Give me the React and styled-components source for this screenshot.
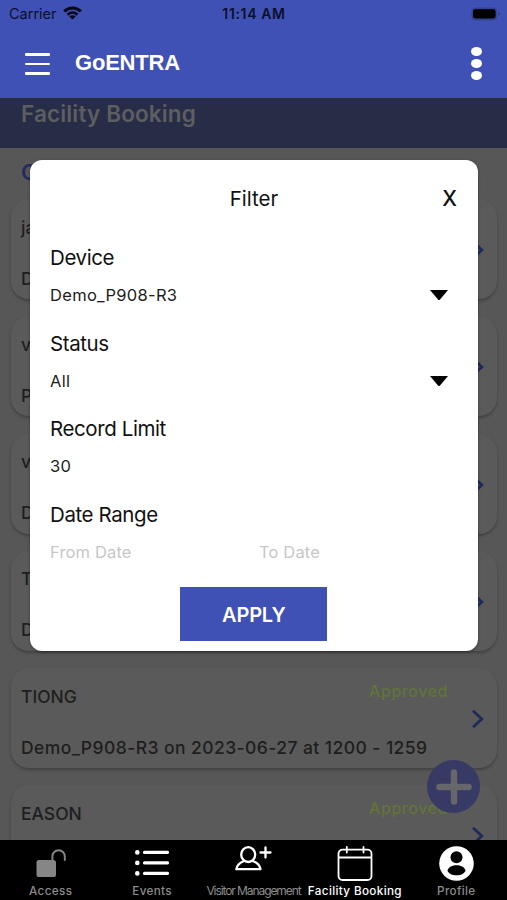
import React from "react";
import styled, { createGlobalStyle } from "styled-components";

const bookings = [
  { name: "ja", detail: "D" },
  { name: "v", detail: "P" },
  { name: "v", detail: "D" },
  { name: "T", detail: "D" },
  { name: "TIONG", detail: "Demo_P908-R3 on 2023-06-27 at 1200 - 1259", status: "Approved" },
  { name: "EASON", status: "Approved" },
];

function WifiIcon() {
  return (
    <svg width="19" height="14" viewBox="0 0 19 14" fill="none" stroke="#06081a" strokeWidth="3">
      <path d="M1.2 5.4C6 .7 13 .7 17.8 5.4" />
      <path d="M4.5 8.7c2.9-2.8 7.1-2.8 10 0" strokeWidth="2.6" />
      <path d="M9.5 13.6 6.3 10.5c1.8-1.7 4.6-1.7 6.4 0z" fill="#06081a" stroke="none" />
    </svg>
  );
}

function BatteryIcon() {
  return (
    <svg width="30" height="14" viewBox="0 0 30 14">
      <rect x=".5" y=".6" width="25.5" height="13" rx="4" fill="#35438f" />
      <rect x="2" y="2.3" width="22.6" height="9.2" rx="2.4" fill="#000" />
      <path d="M27.4 5v4c1.6-.6 1.6-3.4 0-4z" fill="#2b377c" />
    </svg>
  );
}

function AccessIcon() {
  return (
    <svg width="30" height="28" viewBox="0 0 30 28">
      <rect x=".5" y="11" width="19.5" height="17" rx="2.6" fill="#868686" />
      <path d="M16.4 12V7.4a6.2 6.2 0 0 1 12.4 0V11" fill="none" stroke="#868686" strokeWidth="1.9" strokeLinecap="round" />
    </svg>
  );
}

function EventsIcon() {
  return (
    <svg width="34" height="28" viewBox="0 0 34 28" fill="#fff" stroke="#fff" strokeLinecap="round" strokeWidth="3.4">
      <path d="M9.6 3.4H32.4M9.6 13.9H32.4M9.6 24.4H32.4" />
      <g stroke="none">
        <circle cx="2.3" cy="3.4" r="2.3" />
        <circle cx="2.3" cy="13.9" r="2.3" />
        <circle cx="2.3" cy="24.4" r="2.3" />
      </g>
    </svg>
  );
}

function VisitorIcon() {
  return (
    <svg width="38" height="28" viewBox="0 0 38 28" fill="none" stroke="#fff" strokeWidth="2.3" strokeLinecap="round" strokeLinejoin="round">
      <ellipse cx="14.2" cy="9.6" rx="7" ry="7.4" />
      <path d="M9.5 16.2C5.8 17.7 3 20.300 2.300 24.200h24.200c-.7-3.900-3.700-6.500-7.400-8" />
      <path d="M26.500 7.500h10M31.500 2.500v10" />
    </svg>
  );
}

function CalendarIcon() {
  return (
    <svg width="36" height="35" viewBox="0 0 36 35" fill="none" stroke="#fff" strokeWidth="1.8" strokeLinecap="round">
      <path d="M9.5 3.6H5.500a4 4 0 0 0-4 4v22.400a4 4 0 0 0 4 4h25a4 4 0 0 0 4-4V7.600a4 4 0 0 0-4-4h-4M9.500 3.600h17M1.500 11.500h33M9.800 1v5.500M26.500 1v5.500" />
    </svg>
  );
}

function ProfileIcon() {
  return (
    <svg width="35" height="35" viewBox="0 0 35 35">
      <circle cx="17.5" cy="17.5" r="17.3" fill="#fff" />
      <circle cx="17.5" cy="11.2" r="6" fill="#000" />
      <path d="M8.5 24.700c.8-4 5-5.500 9-5.500s8.200 1.500 9 5.500c-1.300 3-4.800 4.600-9 4.600s-7.700-1.600-9-4.600z" fill="#000" />
    </svg>
  );
}

const tabs = [
  { label: "Access", icon: <AccessIcon />, top: 9 },
  { label: "Events", icon: <EventsIcon />, top: 9 },
  { label: "Visitor Management", icon: <VisitorIcon />, top: 5, tight: true },
  { label: "Facility Booking", icon: <CalendarIcon />, top: 6, active: true },
  { label: "Profile", icon: <ProfileIcon />, top: 6 },
];

function Select({ label, value }) {
  return (
    <Field>
      <Label>{label}</Label>
      <ValueRow>
        <Value>{value}</Value>
        <Caret viewBox="0 0 18 10">
          <path d="M0 0h18l-8 9.4q-1 1-2 0z" />
        </Caret>
      </ValueRow>
    </Field>
  );
}

export default function App() {
  return (
    <Screen>
      <GlobalStyle />
      <Header>
        <StatusBar>
          <Carrier>
            Carrier <WifiIcon />
          </Carrier>
          <Clock>11:14 AM</Clock>
          <Battery>
            <BatteryIcon />
          </Battery>
        </StatusBar>
        <NavBar>
          <MenuButton aria-label="Menu">
            <span />
            <span />
            <span />
          </MenuButton>
          <Brand>GoENTRA</Brand>
          <MoreButton aria-label="More">
            <span />
            <span />
            <span />
          </MoreButton>
        </NavBar>
      </Header>

      <Page>
        <PageTitle>Facility Booking</PageTitle>
        <SectionTitle>C</SectionTitle>
        <List>
          {bookings.map((b, i) => (
            <Card key={i}>
              <CardBody>
                <CardTop>
                  <span>{b.name}</span>
                  {b.status && <Status>{b.status}</Status>}
                </CardTop>
                <Detail>{b.detail}</Detail>
              </CardBody>
              <Chevron viewBox="0 0 13 20">
                <path d="M2 1.8 10.8 10 2 18.2" />
              </Chevron>
            </Card>
          ))}
        </List>
        <AddButton aria-label="Add booking">
          <svg width="36" height="36" viewBox="0 0 36 36" stroke="#66666b" strokeWidth="6.4" strokeLinecap="round">
            <path d="M3.4 18h29.200M18 3.400v29.200" />
          </svg>
        </AddButton>
        <Modal>
          <ModalHeader>
            <ModalTitle>Filter</ModalTitle>
            <Close>X</Close>
          </ModalHeader>
          <Select label="Device" value="Demo_P908-R3" />
          <Select label="Status" value="All" />
          <Field>
            <Label>Record Limit</Label>
            <ValueRow>
              <Value>30</Value>
            </ValueRow>
          </Field>
          <Field>
            <Label>Date Range</Label>
            <DateRow>
              <Value $muted>From Date</Value>
              <Value $muted>To Date</Value>
            </DateRow>
          </Field>
          <Apply>APPLY</Apply>
        </Modal>
      </Page>

      <TabBar>
        {tabs.map((t) => (
          <Tab key={t.label}>
            <TabIcon $top={t.top}>{t.icon}</TabIcon>
            <TabLabel $active={t.active} $tight={t.tight}>
              {t.label}
            </TabLabel>
          </Tab>
        ))}
      </TabBar>
    </Screen>
  );
}

const GlobalStyle = createGlobalStyle`
  * {
    box-sizing: border-box;
  }
  body {
    margin: 0;
    font-family: Inter, "Liberation Sans", sans-serif;
  }
  button {
    border: 0;
    padding: 0;
    background: none;
    color: inherit;
    font: inherit;
  }
`;

const Screen = styled.div`
  width: 507px;
  height: 900px;
  display: flex;
  flex-direction: column;
  overflow: hidden;
  background: #000;
`;

const Header = styled.header`
  height: 98px;
  flex: none;
  background: #3f51b5;
`;

const StatusBar = styled.div`
  display: grid;
  grid-template-columns: 1fr auto 1fr;
  align-items: center;
  height: 27px;
  padding: 0 6px 0 9px;
  color: #0b0f2a;
`;

const Carrier = styled.div`
  display: flex;
  align-items: center;
  gap: 6px;
  font-size: 14.5px;
  svg {
    margin-top: -2px;
  }
`;

const Clock = styled.div`
  margin-right: 2px;
  font-weight: 600;
  font-size: 14px;
  letter-spacing: 0.65px;
`;

const Battery = styled.div`
  display: flex;
  justify-content: flex-end;
`;

const NavBar = styled.div`
  display: flex;
  align-items: center;
  height: 71px;
  padding: 0 25px;
`;

const MenuButton = styled.button`
  display: flex;
  flex-direction: column;
  gap: 7px;
  width: 25px;
  margin-top: 3px;
  span {
    height: 2.5px;
    border-radius: 1px;
    background: #fff;
  }
`;

const Brand = styled.h1`
  flex: 1;
  margin: 1px 0 0 25px;
  color: #fff;
  font: bold 22px "Liberation Sans", sans-serif;
  letter-spacing: -0.2px;
`;

const MoreButton = styled.button`
  display: flex;
  flex-direction: column;
  gap: 3px;
  margin-top: 2px;
  span {
    width: 11px;
    height: 9px;
    border-radius: 50%;
    background: #fff;
  }
`;

const Page = styled.main`
  position: relative;
  height: 742px;
  flex: none;
  overflow: hidden;
  background: #575757;
`;

const PageTitle = styled.h2`
  height: 50px;
  margin: 0;
  padding-left: 21px;
  background: #282d47;
  color: #5c5e62;
  font-size: 22.5px;
  line-height: 32px;
  font-weight: 600;
  letter-spacing: 0.15px;
`;

const SectionTitle = styled.h3`
  height: 48px;
  margin: 0;
  padding-left: 21px;
  color: #242b5e;
  font-size: 22px;
  line-height: 48px;
  font-weight: 600;
`;

const List = styled.div`
  display: flex;
  flex-direction: column;
  gap: 17.3px;
  padding: 3px 10px 0 11px;
`;

const Card = styled.div`
  display: flex;
  align-items: center;
  height: 100px;
  flex: none;
  padding: 0 13px 0 10px;
  border-radius: 18px;
  background: #5a5a5a;
  box-shadow: 0 2px 3px rgba(0, 0, 0, 0.25);
  color: #1e1e1e;
  font-weight: 500;
`;

const CardBody = styled.div`
  flex: 1;
  display: flex;
  flex-direction: column;
  gap: 27px;
  padding-top: 8px;
  font-size: 17.5px;
  line-height: 24px;
`;

const CardTop = styled.div`
  display: flex;
  justify-content: space-between;
  height: 24px;
`;

const Status = styled.span`
  margin: -6px 23px 0 0;
  color: #61743a;
  font-size: 16px;
  letter-spacing: 0.55px;
`;

const Detail = styled.div`
  height: 24px;
  white-space: nowrap;
  letter-spacing: 0.43px;
`;

const Chevron = styled.svg`
  width: 13px;
  height: 20px;
  margin-top: 2px;
  fill: none;
  stroke: #202a5a;
  stroke-width: 2.8;
`;

const AddButton = styled.button`
  position: absolute;
  right: 27px;
  bottom: 27px;
  display: flex;
  align-items: center;
  justify-content: center;
  width: 53px;
  height: 53px;
  border-radius: 50%;
  background: #363a65;
`;

const Modal = styled.section`
  position: absolute;
  top: 62px;
  left: 30px;
  width: 448px;
  height: 491px;
  padding: 20px;
  border-radius: 12px;
  background: #fff;
  box-shadow: 0 1px 3px rgba(0, 0, 0, 0.4);
  color: #111;
`;

const ModalHeader = styled.div`
  display: grid;
  grid-template-columns: 1fr auto 1fr;
  height: 61px;
  font-size: 20.5px;
  line-height: 37px;
`;

const ModalTitle = styled.div`
  grid-column: 2;
`;

const Close = styled.button`
  justify-self: end;
  height: 36px;
  margin-right: 1px;
  font-size: 21px;
  font-weight: 500;
`;

const Field = styled.div`
  height: 85.5px;
`;

const Label = styled.div`
  font-size: 20.5px;
  line-height: 33px;
  letter-spacing: -0.4px;
`;

const ValueRow = styled.div`
  display: flex;
  align-items: center;
  justify-content: space-between;
  height: 42px;
  padding-right: 10px;
`;

const Value = styled.div`
  color: ${(p) => (p.$muted ? "#c7c7c7" : "#1c1c1c")};
  font-size: 16.5px;
  letter-spacing: ${(p) => (p.$muted ? "0.15px" : "0.3px")};
`;

const Caret = styled.svg`
  width: 18px;
  height: 10px;
`;

const DateRow = styled.div`
  display: grid;
  grid-template-columns: 209px 1fr;
  align-items: center;
  height: 42px;
`;

const Apply = styled.button`
  display: block;
  width: 147px;
  height: 54px;
  margin: 4px 0 0 130.4px;
  padding-top: 2px;
  background: #3f51b5;
  color: #fff;
  font-size: 20px;
  font-weight: 600;
  letter-spacing: -0.2px;
`;

const TabBar = styled.nav`
  display: grid;
  grid-template-columns: repeat(5, 1fr);
  height: 60px;
  background: #000;
`;

const Tab = styled.div`
  display: flex;
  flex-direction: column;
  align-items: center;
`;

const TabIcon = styled.div`
  height: 43px;
  padding-top: ${(p) => p.$top}px;
  svg {
    display: block;
  }
`;

const TabLabel = styled.div`
  color: ${(p) => (p.$active ? "#fff" : "#8c8c8c")};
  font-size: ${(p) => (p.$tight ? 12 : 11.7)}px;
  line-height: 16px;
  font-weight: ${(p) => (p.$tight ? 400 : 500)};
  letter-spacing: ${(p) => (p.$tight ? "-1.08px" : "0.35px")};
  white-space: nowrap;
`;
